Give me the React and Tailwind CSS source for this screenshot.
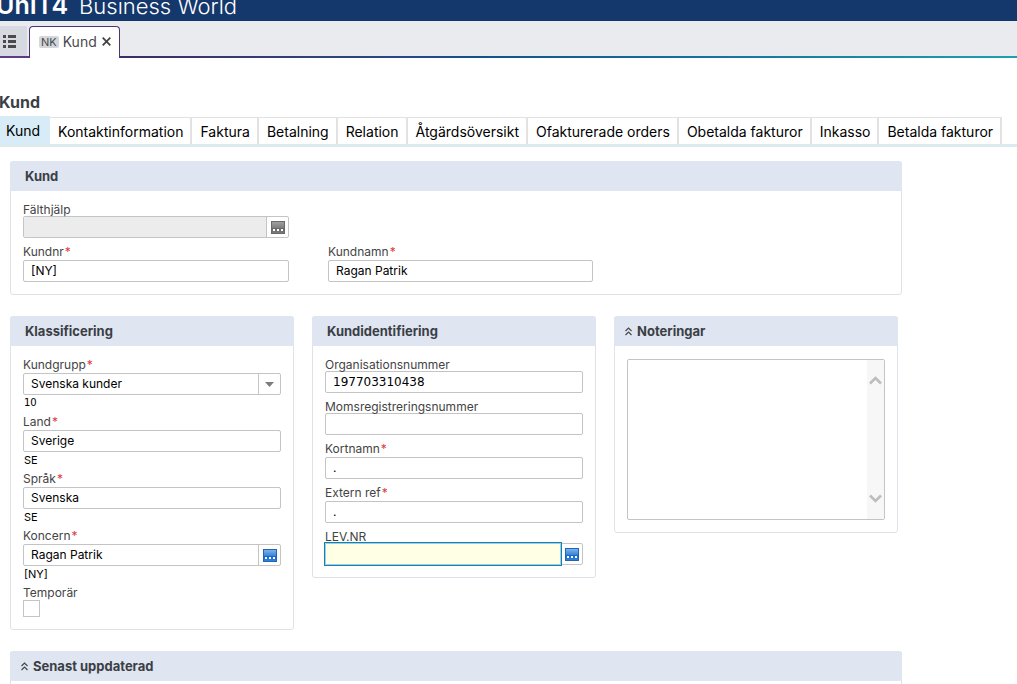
import { useId } from "react";

const tabs = [
  "Kund",
  "Kontaktinformation",
  "Faktura",
  "Betalning",
  "Relation",
  "Åtgärdsöversikt",
  "Ofakturerade orders",
  "Obetalda fakturor",
  "Inkasso",
  "Betalda fakturor",
];

const isNumeric = (text) => /^\d+$/.test(text);

function LookupIcon({ muted }) {
  const id = useId();
  return (
    <svg width="14" height="13" viewBox="0 0 14 13" aria-hidden="true">
      <defs>
        <linearGradient id={id} x1="0" y1="0" x2="0" y2="1">
          <stop offset="0" stopColor={muted ? "#a2a2a2" : "#7db8f0"} />
          <stop offset="0.5" stopColor={muted ? "#808080" : "#3f86d8"} />
          <stop offset="0.55" stopColor={muted ? "#666666" : "#1767c4"} />
          <stop offset="1" stopColor={muted ? "#7c7c7c" : "#2f86e0"} />
        </linearGradient>
      </defs>
      <rect x="0.5" y="0.5" width="13" height="12" fill={`url(#${id})`} stroke={muted ? "#6a6a6a" : "#2565b0"} />
      <path d="M2 8h2v2H2zM6 8h2v2H6zM10 8h2v2h-2z" fill="#fff" />
    </svg>
  );
}

function CollapseIcon() {
  return (
    <svg width="7" height="9" viewBox="0 0 7 9" fill="none" stroke="#444" strokeWidth="1.1" aria-hidden="true">
      <path d="M0.5 4L3.5 1L6.5 4M0.5 8L3.5 5L6.5 8" />
    </svg>
  );
}

function Panel({ title, collapsible, className = "", children }) {
  return (
    <section className={`rounded-[3px] border border-[#e0e1e8] bg-white ${className}`}>
      <h2
        className={`-mx-px -mt-px flex h-[30px] items-center gap-[5px] rounded-t-[3px] bg-[#dfe5f1] pt-px text-[13px] font-bold text-[#3b3f45] ${collapsible ? "pl-[11px]" : "pl-[15px]"}`}
      >
        {collapsible && <CollapseIcon />}
        {title}
      </h2>
      <div className="px-3 pt-[13px] pb-3">{children}</div>
    </section>
  );
}

function Field({ label, required, value = "", hint, type = "text", lookup, disabled, focused }) {
  const id = useId();
  const text = "min-w-0 flex-1 pl-[7px] text-[12px] text-black outline-none";
  const labelGap = type === "checkbox" ? "pb-px" : required ? "pb-[2px]" : "";
  const state = focused
    ? "-my-[2px] -ml-[2px] border border-[#1f7fa8] bg-[#ffffe6] ring-1 ring-[#8fd4ee] ring-inset"
    : disabled
      ? "bg-[#ececec]"
      : "bg-transparent";
  return (
    <div>
      <label
        htmlFor={id}
        className={`flex gap-px text-[12px] leading-3 whitespace-nowrap text-[#444] ${labelGap}`}
      >
        {label}
        {required && <span className="text-[#e0393e]">*</span>}
      </label>
      {type === "checkbox" ? (
        <input
          id={id}
          type="checkbox"
          className="block size-[17px] appearance-none border border-[#c4c4c4] bg-white"
        />
      ) : (
        <div className="flex h-[22px] rounded-[2px] border border-[#c4c4c4] bg-white">
          {type === "select" ? (
            <>
              <select id={id} defaultValue={value} className={`appearance-none bg-transparent ${text}`}>
                <option>{value}</option>
              </select>
              <span className="flex w-[22px] items-center justify-center border-l border-[#c4c4c4]">
                <svg width="9" height="5" viewBox="0 0 9 5" aria-hidden="true">
                  <path d="M0 0h9L4.5 5z" fill="#7d7d7d" />
                </svg>
              </span>
            </>
          ) : (
            <input
              id={id}
              type="text"
              defaultValue={value}
              disabled={disabled}
              className={`${text} ${state} ${isNumeric(value) ? "font-['DejaVu_Sans',sans-serif]" : ""}`}
            />
          )}
          {lookup && (
            <button
              type="button"
              aria-label={`Sök ${label}`}
              className={`flex items-center justify-center ${focused ? "w-5" : "w-[22px] border-l border-[#c4c4c4]"}`}
            >
              <LookupIcon muted={disabled} />
            </button>
          )}
        </div>
      )}
      {hint && (
        <div
          className={`-mb-[3px] pl-[1px] leading-4 text-black ${isNumeric(hint) ? "font-['DejaVu_Sans',sans-serif] text-[10px]" : "text-[11px]"}`}
        >
          {hint}
        </div>
      )}
    </div>
  );
}

function ScrollChevron({ down }) {
  return (
    <svg width="13" height="9" viewBox="0 0 13 9" fill="none" stroke="#bdbdbd" strokeWidth="2.6" aria-hidden="true">
      <path d={down ? "M1 1.5L6.5 7L12 1.5" : "M1 7.5L6.5 2L12 7.5"} />
    </svg>
  );
}

export default function App() {
  return (
    <div className="h-screen overflow-hidden bg-white font-['Inter','Liberation_Sans',sans-serif]">
      <header className="flex h-[21px] items-end overflow-hidden bg-[#14376c] text-white">
        <div className="flex items-baseline gap-[11px] pb-[3px] leading-6 whitespace-nowrap">
          <span className="-ml-1 text-[25px] font-semibold">UnIT4</span>
          <span className="text-[22px] font-light">Business World</span>
        </div>
      </header>

      <div className="flex h-[37px] bg-[#eaebef]">
        <div className="flex flex-col pt-[5px]">
          <button type="button" aria-label="Meny" className="flex w-[27px] flex-1 items-center bg-[#d6d9e0] pl-[3px]">
            <svg width="13" height="13" viewBox="0 0 13 13" fill="#4a4a4a" aria-hidden="true">
              <path d="M0 0h3v3H0zM5 0h8v3H5zM0 5h3v3H0zM5 5h8v3H5zM0 10h3v3H0zM5 10h8v3H5z" />
            </svg>
          </button>
          <div className="h-[2px] w-[29px] bg-[#5f3a86]" />
        </div>
        <div className="mt-[5px] flex items-center gap-1 rounded-t-[4px] border border-b-0 border-[#4b3570] bg-white pr-[7px] pb-[2px] pl-[9px] text-[#4a4a4a]">
          <span className="rounded-[2px] bg-[#d3d6da] px-[2px] text-[11px] leading-3">NK</span>
          <span className="text-[14px]">Kund</span>
          <button type="button" aria-label="Stäng" className="p-px">
            <svg width="9" height="9" viewBox="0 0 9 9" stroke="#444" strokeWidth="1.8" aria-hidden="true">
              <path d="M0.7 0.7L8.3 8.3M8.3 0.7L0.7 8.3" />
            </svg>
          </button>
        </div>
        <div className="flex flex-1 items-end">
          <div className="h-[2px] flex-1 bg-linear-to-r from-[#3d2c66] via-[#14518c] via-40% to-[#1fa0ae]" />
        </div>
      </div>

      <h1 className="-ml-px mt-[33px] text-[16px] leading-[22px] font-bold text-[#3b3f45]">Kund</h1>
      <nav className="mt-1 flex h-[30px] border-b-[3px] border-[#dde9f0]">
        {tabs.map((tab, i) =>
          i === 0 ? (
            <a key={tab} href="#kund" className="-mt-px flex items-center bg-[#d8ecf7] pr-[10px] pl-[6px] text-[14px] text-black">
              {tab}
            </a>
          ) : (
            <a
              key={tab}
              href="#flik"
              className="flex items-center border-t border-r-2 border-[#e2e2e2] pt-px pr-[7px] pl-2 text-[14px] whitespace-nowrap text-black"
            >
              {tab}
            </a>
          ),
        )}
      </nav>

      <main className="mt-[14px] flex flex-col gap-[21px] px-[10px]">
        <Panel title="Kund" className="w-[892px]">
          <div className="grid grid-cols-[266px_265px] gap-x-[39px] gap-y-2">
            <div className="col-span-2 grid grid-cols-subgrid">
              <Field label="Fälthjälp" lookup disabled />
            </div>
            <Field label="Kundnr" required value="[NY]" />
            <Field label="Kundnamn" required value="Ragan Patrik" />
          </div>
        </Panel>

        <div className="grid grid-cols-[284px_284px_284px] items-start gap-[18px]">
          <Panel title="Klassificering">
            <div className="flex flex-col gap-2">
              <Field label="Kundgrupp" required type="select" value="Svenska kunder" hint="10" />
              <Field label="Land" required value="Sverige" hint="SE" />
              <Field label="Språk" required value="Svenska" hint="SE" />
              <Field label="Koncern" required value="Ragan Patrik" hint="[NY]" lookup />
              <Field label="Temporär" type="checkbox" />
            </div>
          </Panel>
          <Panel title="Kundidentifiering">
            <div className="flex flex-col gap-2">
              <Field label="Organisationsnummer" value="197703310438" />
              <Field label="Momsregistreringsnummer" />
              <Field label="Kortnamn" required value="." />
              <Field label="Extern ref" required value="." />
              <Field label="LEV.NR" lookup focused />
            </div>
          </Panel>
          <Panel title="Noteringar" collapsible>
            <div className="flex h-[161px] rounded-[2px] border border-[#c4c4c4]">
              <textarea aria-label="Noteringar" className="min-w-0 flex-1 resize-none p-1 text-[12px] outline-none" />
              <div className="flex w-[17px] flex-col items-center justify-between bg-[#f7f7f7] py-4">
                <ScrollChevron />
                <ScrollChevron down />
              </div>
            </div>
          </Panel>
        </div>

        <Panel title="Senast uppdaterad" collapsible className="w-[892px]">
          <div className="h-10" />
        </Panel>
      </main>
    </div>
  );
}
